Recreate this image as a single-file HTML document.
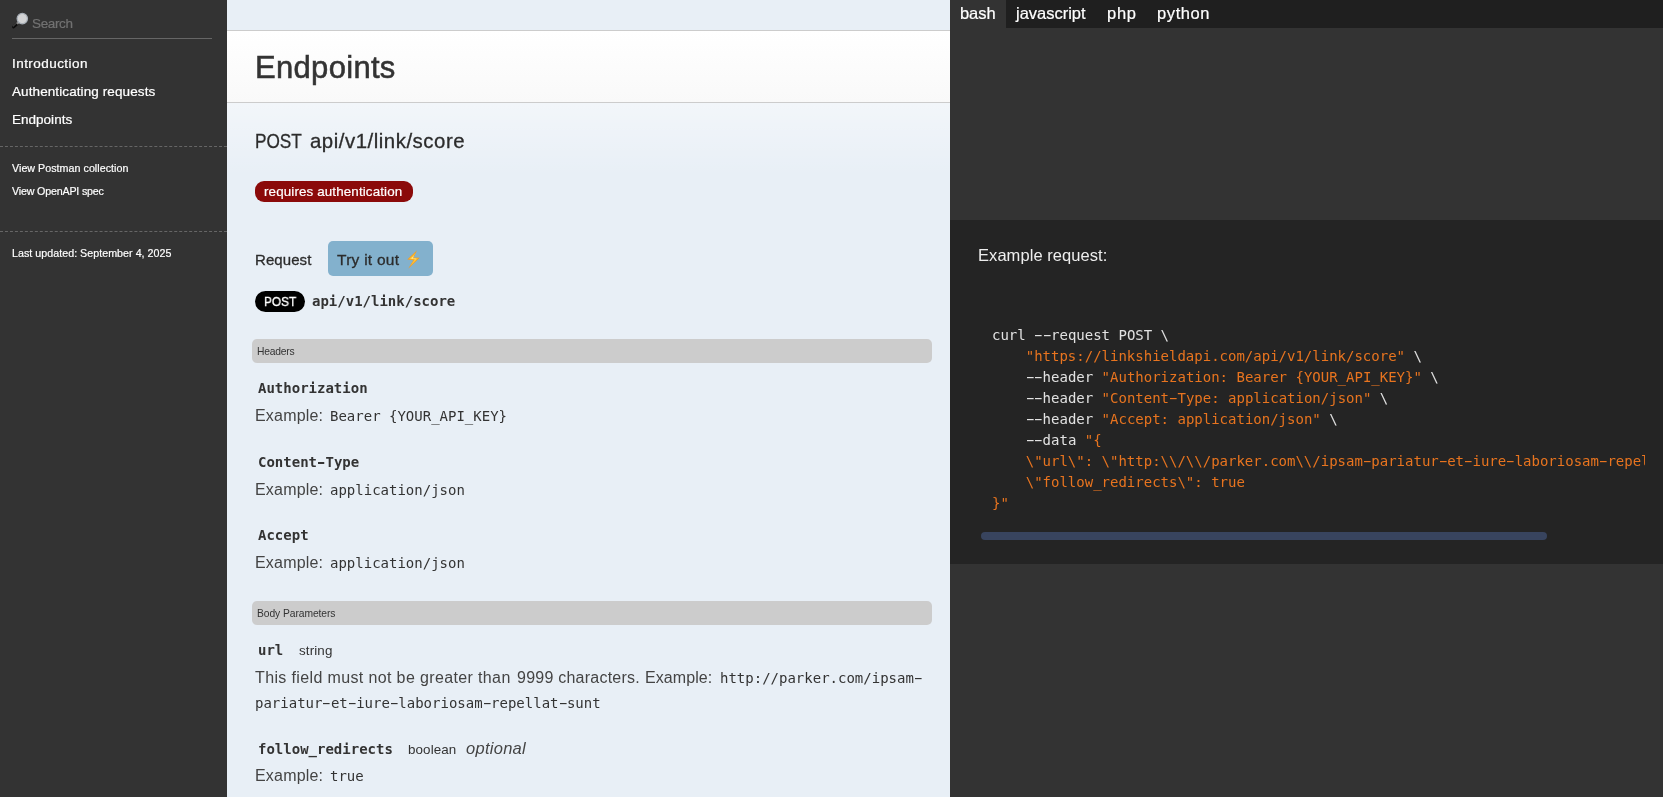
<!DOCTYPE html>
<html lang="en">
<head>
<meta charset="utf-8">
<title>LinkShield API Documentation</title>
<style>
*{box-sizing:border-box;margin:0;padding:0}
html,body{width:1663px;height:797px;overflow:hidden;background:#e8eff6;}
body{font-family:"Liberation Sans",sans-serif;color:#333;position:relative;font-size:14px;}
.abs,.ln{will-change:transform;}
h2,h3,#t_try{-webkit-text-stroke:0.3px #2c2c2c;color:#2c2c2c;}
.abs{position:absolute;white-space:nowrap;line-height:1;}
.mono{font-family:"DejaVu Sans Mono","Liberation Mono",monospace;font-size:14px;}
b.mono{font-weight:bold}
/* sidebar */
#sidebar{position:absolute;left:0;top:0;width:227px;height:797px;background:#333;color:#fff;}
#sidebar .nav{font-size:13.5px;-webkit-text-stroke:0.22px #fff;}
#sidebar .dash{position:absolute;left:0;width:227px;height:0;border-top:1px dashed #666;}
#sidebar .foot{font-size:10.7px;-webkit-text-stroke:0.18px #fff;}
/* content */
#h1box{position:absolute;left:227px;top:30px;width:723px;height:73px;border-top:1px solid #ccc;border-bottom:1px solid #ccc;background:linear-gradient(to bottom,#fff,#f9f9f9);}
.light{color:#444;}
.panel{position:absolute;left:252px;width:680px;height:24px;background:#ccc;border-radius:5px;}
/* dark */
#dark{position:absolute;left:950px;top:0;width:713px;height:797px;background:#333;}
#tabs{position:absolute;left:0;top:0;width:713px;height:28px;background:#1f1f1f;}
#tabs .active{position:absolute;left:0;top:0;width:56px;height:28px;background:#333;}
#tabs .t{color:#fff;font-size:16.5px;-webkit-text-stroke:0.2px #fff;}
#codebox{position:absolute;left:0;top:220px;width:713px;height:344px;background:#242424;}
#codeclip{position:absolute;left:31px;top:0;width:664px;height:344px;overflow:hidden;}
#codeclip .ln{position:absolute;left:11px;white-space:pre;line-height:21px;height:21px;color:#e2e2e2;font-size:14px;}
.s{color:#e8741f}
.hy{display:inline-block;transform:scaleX(1.85);}
#t_ct .hy{transform:scaleX(1.45);}
#thumb{position:absolute;left:31px;top:312px;width:566px;height:8px;border-radius:4px;background:#38445e;}
</style>
</head>
<body>

<div id="sidebar">
  <svg class="abs" style="left:11px;top:12px" width="18" height="18" viewBox="0 0 18 18">
    <line x1="2.6" y1="15" x2="7" y2="10.9" stroke="#0c0c0c" stroke-width="3" stroke-linecap="round"/>
    <line x1="2.2" y1="14.2" x2="6.4" y2="10.2" stroke="#555" stroke-width="1" stroke-linecap="round"/>
    <line x1="6" y1="11.8" x2="8" y2="9.9" stroke="#8a8a8a" stroke-width="2.4"/>
    <circle cx="11.3" cy="6.6" r="5.2" fill="#d2d3d4" stroke="#a9b0b8" stroke-width="1.2"/>
  </svg>
  <div class="abs" id="t_search" style="left:32px;top:17px;font-size:13.5px;color:#727272;-webkit-text-stroke:0.2px #727272;letter-spacing:-0.36px">Search</div>
  <div class="abs" style="left:12px;top:38px;width:200px;height:1px;background:#666"></div>
  <div class="abs nav" id="t_intro" style="left:12px;top:57px;letter-spacing:0.447px">Introduction</div>
  <div class="abs nav" id="t_auth" style="left:12px;top:85px;letter-spacing:0.097px">Authenticating requests</div>
  <div class="abs nav" id="t_endp" style="left:12px;top:113px;letter-spacing:0.016px">Endpoints</div>
  <div class="dash" style="top:146px"></div>
  <div class="abs foot" id="t_postman" style="left:12px;top:163px;letter-spacing:0.033px">View Postman collection</div>
  <div class="abs foot" id="t_openapi" style="left:12px;top:186px;letter-spacing:-0.181px">View OpenAPI spec</div>
  <div class="dash" style="top:231px"></div>
  <div class="abs foot" id="t_updated" style="left:12px;top:248px;letter-spacing:0.027px">Last updated: September 4, 2025</div>
</div>

<div id="h1box"></div>
<div style="position:absolute;left:227px;top:103px;width:723px;height:72px;background:linear-gradient(to bottom,rgba(255,255,255,.45),rgba(255,255,255,0))"></div>
<h1 class="abs" id="t_h1" style="-webkit-text-stroke:0.55px #333;left:255px;top:52px;font-size:31px;font-weight:normal;letter-spacing:0.309px">Endpoints</h1>
<h2 class="abs" id="t_h2" style="left:255px;top:131px;font-size:20.4px;font-weight:normal"><span id="t_h2a" style="display:inline-block;font-size:20px;transform:scaleX(.86);transform-origin:0 50%;margin-right:-7.6px">POST</span> <span id="t_h2b" style="letter-spacing:0.53px;margin-left:2.4px">api/v1/link/score</span></h2>

<div class="abs" style="left:255px;top:181px;width:158px;height:21px;border-radius:9px;background:#8b0a0a"></div>
<div class="abs" id="t_badge" style="left:264px;top:185px;font-size:13.4px;color:#fff;-webkit-text-stroke:0.2px #fff;letter-spacing:0.125px">requires authentication</div>

<h3 class="abs" id="t_req" style="left:255px;top:252px;font-size:15px;font-weight:normal;letter-spacing:0.083px">Request</h3>
<div class="abs" style="left:328px;top:241px;width:105px;height:35px;border-radius:5px;background:#83b1cd"></div>
<div class="abs" id="t_try" style="left:337px;top:252px;font-size:15.5px;letter-spacing:0.256px">Try it out</div>
<svg class="abs" style="left:406px;top:249px" width="16" height="21" viewBox="406 249 16 21">
  <polygon points="417,250.2 407.3,259.5 413.3,260.3 408.2,268.7 419.8,257.7 413.6,257.6" fill="#f79d1e"/>
  <polygon points="415.8,252.6 409,259 414.4,259.6 410.3,266 418,258.3 412.6,258" fill="#fcc53a"/>
  <polygon points="414,256 411,258.6 415.6,259.3 413.4,261.6 416.2,258.8 412.8,258.4" fill="#ffeea0"/>
</svg>

<div class="abs" style="left:255px;top:291px;width:50px;height:21px;border-radius:10.5px;background:#000"></div>
<div class="abs" id="t_post" style="left:264px;top:295px;font-size:13.2px;color:#fff;transform:scaleX(.9);transform-origin:0 50%;-webkit-text-stroke:0.3px #fff">POST</div>
<b class="abs mono" id="t_path" style="left:312px;top:294px">api/v1/link/score</b>

<div class="panel" style="top:339px"></div>
<div class="abs" id="t_headers" style="left:257px;top:347px;font-size:10.3px;letter-spacing:-0.199px">Headers</div>

<b class="abs mono" id="t_authz" style="left:258px;top:381px">Authorization</b>
<div class="abs light" id="t_ex1" style="left:255px;top:408px;font-size:16px;letter-spacing:0.187px">Example:</div>
<div class="abs mono" id="t_bearer" style="left:330px;top:409px">Bearer {YOUR_API_KEY}</div>

<b class="abs mono" id="t_ct" style="left:258px;top:455px">Content<span class="hy">-</span>Type</b>
<div class="abs light" id="t_ex2" style="left:255px;top:482px;font-size:16px;letter-spacing:0.187px">Example:</div>
<div class="abs mono" id="t_json1" style="left:330px;top:483px">application/json</div>

<b class="abs mono" id="t_accept" style="left:258px;top:528px">Accept</b>
<div class="abs light" id="t_ex3" style="left:255px;top:555px;font-size:16px;letter-spacing:0.187px">Example:</div>
<div class="abs mono" id="t_json2" style="left:330px;top:556px">application/json</div>

<div class="panel" style="top:601px"></div>
<div class="abs" id="t_bodyp" style="left:257px;top:609px;font-size:10.3px;letter-spacing:-0.077px">Body Parameters</div>

<b class="abs mono" id="t_url" style="left:258px;top:643px">url</b>
<div class="abs" id="t_string" style="left:298.7px;top:644px;font-size:13.4px;letter-spacing:0.12px">string</div>
<div class="abs light" id="t_fieldA" style="left:254.7px;top:670px;font-size:16px;letter-spacing:0.367px">This field must not be greater than </div>
<div class="abs light" id="t_fieldB" style="left:517px;top:670px;font-size:16px;letter-spacing:0.233px">9999 characters. </div>
<div class="abs light" id="t_fieldC" style="left:645px;top:670px;font-size:16px;letter-spacing:0.072px">Example:</div>
<div class="abs mono" id="t_http" style="left:720px;top:671px">http://parker.com/ipsam<span class="hy">-</span></div>
<div class="abs mono" id="t_pari" style="left:255px;top:696px">pariatur<span class="hy">-</span>et<span class="hy">-</span>iure<span class="hy">-</span>laboriosam<span class="hy">-</span>repellat<span class="hy">-</span>sunt</div>

<b class="abs mono" id="t_follow" style="left:258px;top:742px">follow_redirects</b>
<div class="abs" id="t_bool" style="left:408px;top:743px;font-size:13.4px;letter-spacing:0.1px">boolean</div>
<i class="abs light" id="t_opt" style="left:466px;top:740px;font-size:16.5px;letter-spacing:0.27px">optional</i>
<div class="abs light" id="t_ex4" style="left:255px;top:768px;font-size:16px;letter-spacing:0.187px">Example:</div>
<div class="abs mono" id="t_true" style="left:330px;top:769px">true</div>

<div id="dark">
  <div id="tabs">
    <div class="active"></div>
    <div class="abs t" id="t_bash" style="left:10px;top:5px;letter-spacing:-0.068px">bash</div>
    <div class="abs t" id="t_js" style="left:66px;top:5px;letter-spacing:-0.009px">javascript</div>
    <div class="abs t" id="t_php" style="left:157px;top:5px;letter-spacing:0.75px">php</div>
    <div class="abs t" id="t_py" style="left:207px;top:5px;letter-spacing:0.6px">python</div>
  </div>
  <div id="codebox">
    <div class="abs" id="t_exreq" style="left:28px;top:27px;font-size:16.5px;color:#eee;letter-spacing:0.06px">Example request:</div>
    <div id="codeclip">
      <div class="ln mono" style="top:105px">curl <span class="hy">-</span><span class="hy">-</span>request POST \</div>
      <div class="ln mono" style="top:126px">    <span class="s">"https://linkshieldapi.com/api/v1/link/score"</span> \</div>
      <div class="ln mono" style="top:147px">    <span class="hy">-</span><span class="hy">-</span>header <span class="s">"Authorization: Bearer {YOUR_API_KEY}"</span> \</div>
      <div class="ln mono" style="top:168px">    <span class="hy">-</span><span class="hy">-</span>header <span class="s">"Content<span class="hy">-</span>Type: application/json"</span> \</div>
      <div class="ln mono" style="top:189px">    <span class="hy">-</span><span class="hy">-</span>header <span class="s">"Accept: application/json"</span> \</div>
      <div class="ln mono" style="top:210px">    <span class="hy">-</span><span class="hy">-</span>data <span class="s">"{</span></div>
      <div class="ln mono" style="top:231px"><span class="s">    \"url\": \"http:\\/\\/parker.com\\/ipsam<span class="hy">-</span>pariatur<span class="hy">-</span>et<span class="hy">-</span>iure<span class="hy">-</span>laboriosam<span class="hy">-</span>repellat<span class="hy">-</span>sunt\",</span></div>
      <div class="ln mono" style="top:252px"><span class="s">    \"follow_redirects\": true</span></div>
      <div class="ln mono" style="top:273px"><span class="s">}"</span></div>
    </div>
    <div id="thumb"></div>
  </div>
</div>

</body>
</html>
